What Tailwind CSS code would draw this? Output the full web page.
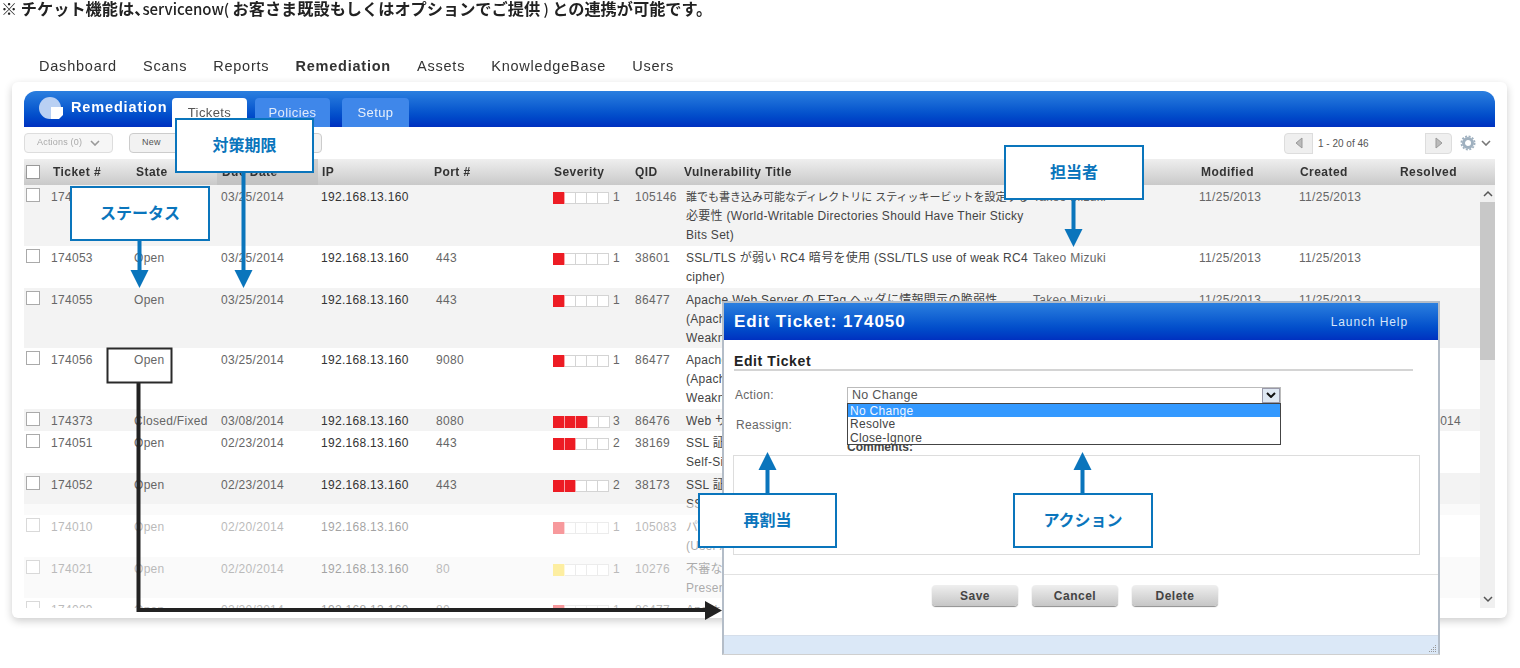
<!DOCTYPE html>
<html lang="ja">
<head>
<meta charset="UTF-8">
<title>Remediation</title>
<script src="https://cdn.jsdelivr.net/npm/@tailwindcss/browser@4"></script>
</head>
<body class="bg-white font-['Liberation_Sans','Noto_Sans_CJK_JP',sans-serif]">
<div class="relative w-[1520px] h-[668px] overflow-hidden blur-[0.4px]">

  <!-- caption -->
  <p class="h-[18px] pl-px text-[16.2px] leading-[16px] font-bold text-[#222] whitespace-nowrap font-['Noto_Sans_CJK_JP',sans-serif]">※ チケット機能は<span class="-mr-[8px]">、</span><span class="text-[15px] font-medium">servicenow( </span>お客さま既設もしくはオプションでご提供<span class="text-[15px] font-medium"> ) </span>との連携が可能です。</p>

  <!-- top nav -->
  <nav class="flex mt-[36px] mb-[2px] h-[26px] pl-[39px] items-center gap-[26px] text-[14.5px] tracking-[0.78px] text-[#333]">
    <a>Dashboard</a><a>Scans</a><a>Reports</a><a class="font-bold">Remediation</a><a>Assets</a><a>KnowledgeBase</a><a>Users</a>
  </nav>

  <!-- main panel -->
  <div class="ml-[12px] w-[1495px] h-[536px] bg-white rounded-md shadow-[0_3px_8px_rgba(0,0,0,0.2)] px-[12px] pt-[9px] overflow-hidden">
    <!-- blue title bar -->
    <div class="flex items-end h-[36px] rounded-t-xl bg-gradient-to-b from-[#2b7fdf] to-[#0030c0] pl-[14px]">
      <div class="flex items-center self-start h-[34px] w-[134px] shrink-0">
        <svg width="26" height="24" viewBox="0 0 26 24"><path d="M12 1a11 11 0 1 0 0 22 11 11 0 0 0 0-22z" fill="#b9d0f3"/><path d="M13 11h12v8l-4 4h-8z" fill="#fff"/></svg>
        <span class="ml-[7px] text-[14.5px] font-bold tracking-[0.85px] text-white">Remediation</span>
      </div>
      <div class="flex h-[29px] w-[75px] justify-center pt-[5px] rounded-t bg-white text-[13px] tracking-[0.4px] text-[#555]">Tickets</div>
      <div class="flex h-[29px] w-[75px] ml-[8px] justify-center pt-[5px] rounded-t bg-[#3f87ea] text-[13px] tracking-[0.4px] text-[#dfeafa]">Policies</div>
      <div class="flex h-[29px] w-[67px] ml-[12px] justify-center pt-[5px] rounded-t bg-[#3f87ea] text-[13px] tracking-[0.4px] text-[#e8f0fb]">Setup</div>
    </div>

    <!-- toolbar -->
    <div class="flex items-center h-[32px] text-[9px] tracking-[0.2px]">
      <div class="flex items-center justify-between w-[89px] h-[20px] px-[12px] rounded border border-[#ddd] bg-[#f6f6f6] text-[#aaa]">Actions (0)
        <svg width="10" height="6" viewBox="0 0 10 6"><path d="M1 1l4 4 4-4" fill="none" stroke="#999" stroke-width="1.6"/></svg>
      </div>
      <div class="flex items-center justify-between w-[193px] h-[20px] ml-[16px] px-[12px] rounded border border-[#ccc] bg-[#f2f2f2] text-[#555]">New
        <svg width="10" height="6" viewBox="0 0 10 6"><path d="M1 1l4 4 4-4" fill="none" stroke="#999" stroke-width="1.6"/></svg>
      </div>
      <div class="flex items-center h-[21px] ml-auto rounded border border-[#ddd] bg-[#efefef]">
        <div class="flex items-center justify-center w-[27px]"><svg width="8" height="12" viewBox="0 0 8 12"><path d="M7 1v10L1 6z" fill="#bbb" stroke="#999"/></svg></div>
        <div class="flex items-center w-[114px] h-[21px] pl-[5px] bg-white border-x border-[#ddd] text-[#555] text-[10px] tracking-normal">1 - 20 of 46</div>
        <div class="flex items-center justify-center w-[25px]"><svg width="8" height="12" viewBox="0 0 8 12"><path d="M1 1v10l6-5z" fill="#bbb" stroke="#999"/></svg></div>
      </div>
      <svg class="ml-[8px]" width="16" height="16" viewBox="0 0 16 16"><circle cx="8" cy="8" r="4.5" fill="none" stroke="#9fb0bf" stroke-width="3"/><circle cx="8" cy="8" r="6.6" fill="none" stroke="#9fb0bf" stroke-width="1.8" stroke-dasharray="2 1.5"/></svg>
      <svg class="ml-[5px] mr-[4px]" width="10" height="6" viewBox="0 0 10 6"><path d="M1 1l4 4 4-4" fill="none" stroke="#777" stroke-width="1.6"/></svg>
    </div>

    <!-- table head -->
    <div class="grid grid-cols-[29px_83px_86px_100px_112px_120px_81px_49px_517px_99px_100px_1fr] items-center h-[26px] bg-gradient-to-b from-[#efefef] to-[#c9c9c9] text-[12px] font-bold tracking-[0.45px] text-[#333]">
      <span class="ml-[2px] w-[14px] h-[14px] border border-[#999] bg-white"></span>
      <span>Ticket #</span><span>State</span>
      <span class="flex items-center justify-self-start w-[101px] h-full bg-[#bdbdbd]/60 -ml-[5px] pl-[5px]">Due Date</span>
      <span>IP</span><span>Port #</span><span>Severity</span><span>QID</span><span>Vulnerability Title</span><span>Modified</span><span>Created</span><span>Resolved</span>
    </div>

    <!-- table body and scrollbar -->
    <div class="flex h-[423px] overflow-hidden">
      <div id="rows" class="relative w-[1456px] shrink-0 overflow-hidden">
        <div class="absolute z-10 top-[319px] inset-x-0 bottom-0 bg-white/55"></div>
      </div>
      <div class="flex flex-col items-center w-[16px] bg-[#f0f0f0]">
        <svg class="my-[5px] shrink-0" width="10" height="7" viewBox="0 0 10 7"><path d="M1 6l4-4 4 4" fill="none" stroke="#555" stroke-width="1.5"/></svg>
        <div class="w-full h-[158px] shrink-0 bg-[#c8c8c8]"></div>
        <svg class="mt-auto mb-[5px] shrink-0" width="10" height="7" viewBox="0 0 10 7"><path d="M1 1l4 4 4-4" fill="none" stroke="#555" stroke-width="1.5"/></svg>
      </div>
    </div>
  </div>

  <!-- edit ticket dialog -->
  <div class="absolute z-20 left-[722px] top-[301px] flex flex-col w-[718px] h-[354px] bg-white border-2 border-[#b4bdc8] border-b-[#cfcfcf]">
    <div class="flex shrink-0 items-center justify-between h-[37px] px-[10px] pr-[30px] bg-gradient-to-b from-[#2b7fdf] to-[#0030c0] text-white">
      <span class="text-[17px] font-bold tracking-[1px]">Edit Ticket: 174050</span>
      <span class="text-[12px] tracking-[0.9px] text-[#d8e6fa]">Launch Help</span>
    </div>
    <div class="relative flex-1 px-[10px]">
      <h2 class="h-[31px] mr-[15px] pt-[13px] border-b-2 border-[#d4d4d4] text-[14px] leading-[16px] font-bold tracking-[0.6px] text-[#222]">Edit Ticket</h2>
      <div class="flex mt-[16px] items-center h-[16px] text-[12px] tracking-[0.3px] text-[#666]">
        <span class="w-[113px] pl-px">Action:</span>
        <div class="relative flex justify-between items-center w-[434px] h-[17px] pl-[4px] border border-[#bbb] text-[#555] text-[12.5px]">No Change
          <span class="flex items-center justify-center w-[18px] h-[15px] bg-[#dfe8f3] border border-[#99a]"><svg width="10" height="6" viewBox="0 0 10 6"><path d="M1 1l4 4 4-4" fill="none" stroke="#111" stroke-width="2"/></svg></span>
          <!-- open select list -->
          <div class="absolute z-10 left-[-1px] top-[15px] w-[434px] h-[42px] bg-white border border-[#444] text-[12px] leading-[14px] tracking-[0.3px] text-[#444]">
            <div class="h-[13px] pl-[2px] bg-[#3399ff] text-[#f0f6ff]">No Change</div>
            <div class="pl-[2px]">Resolve</div>
            <div class="pl-[2px]">Close-Ignore</div>
          </div>
        </div>
      </div>
      <div class="flex mt-[14px] h-[16px] items-center text-[12px] tracking-[0.3px] text-[#666]"><span class="pl-[2px]">Reassign:</span></div>
      <p class="ml-[113px] mt-[8px] h-[14px] text-[12px] leading-[13px] font-bold text-[#444]">Comments:</p>
      <div class="h-[100px] w-[687px] -ml-px border border-[#ddd]"></div>
      <div class="flex justify-center gap-[14px] -mx-[10px] mt-[19px] pt-[10px] h-[61px] border-t border-[#e2e2e2] pr-[12px] text-[12px] font-bold tracking-[0.5px] text-[#444]">
        <button class="w-[86px] h-[21px] rounded-sm bg-gradient-to-b from-[#efefef] to-[#c6c6c6] shadow-[0_1px_1px_rgba(0,0,0,0.45)]">Save</button>
        <button class="w-[86px] h-[21px] rounded-sm bg-gradient-to-b from-[#efefef] to-[#c6c6c6] shadow-[0_1px_1px_rgba(0,0,0,0.45)]">Cancel</button>
        <button class="w-[86px] h-[21px] rounded-sm bg-gradient-to-b from-[#efefef] to-[#c6c6c6] shadow-[0_1px_1px_rgba(0,0,0,0.45)]">Delete</button>
      </div>
    </div>
    <div class="flex shrink-0 justify-end items-end h-[19px] bg-[#dbe8f7] border-t border-[#d5deea] p-px">
      <svg width="9" height="9" viewBox="0 0 9 9" fill="#999"><rect x="7" y="1" width="1" height="1"/><rect x="5" y="3" width="1" height="1"/><rect x="7" y="3" width="1" height="1"/><rect x="3" y="5" width="1" height="1"/><rect x="5" y="5" width="1" height="1"/><rect x="7" y="5" width="1" height="1"/><rect x="1" y="7" width="1" height="1"/><rect x="3" y="7" width="1" height="1"/><rect x="5" y="7" width="1" height="1"/><rect x="7" y="7" width="1" height="1"/></svg>
    </div>
  </div>

  <!-- annotation arrows -->
  <svg class="absolute z-30 inset-0 pointer-events-none" width="1520" height="668" viewBox="0 0 1520 668">
    <g fill="#0a75bc">
      <rect x="137.500" y="240" width="4" height="32"/><path d="M130.500 270h18l-9 18z"/>
      <rect x="241.500" y="172" width="4" height="100"/><path d="M234.500 270h18l-9 18z"/>
      <rect x="1071.500" y="199" width="4" height="32"/><path d="M1064.500 229h18l-9 18z"/>
      <rect x="765.500" y="468" width="4" height="25"/><path d="M758.500 470h18l-9-18z"/>
      <rect x="1080.500" y="468" width="4" height="25"/><path d="M1073.500 470h18l-9-18z"/>
    </g>
    <path d="M138.500 383V610H708" fill="none" stroke="#222" stroke-width="4"/>
    <path d="M705 601l17 9.500-17 9.500z" fill="#222"/>
    <rect x="107.500" y="348.500" width="64" height="34" fill="none" stroke="#2a2a2a" stroke-width="2"/>
  </svg>

  <!-- annotation callouts -->
  <div class="absolute z-30 left-[175px] top-[118px] flex items-center justify-center w-[139px] h-[55px] bg-white border-2 border-[#0a75bc] text-[16px] font-bold text-[#0a75bc]">対策期限</div>
  <div class="absolute z-30 left-[1004px] top-[145px] flex items-center justify-center w-[140px] h-[55px] bg-white border-2 border-[#0a75bc] text-[16px] font-bold text-[#0a75bc]">担当者</div>
  <div class="absolute z-30 left-[70px] top-[186px] flex items-center justify-center w-[140px] h-[55px] bg-white border-2 border-[#0a75bc] text-[16px] font-bold text-[#0a75bc]">ステータス</div>
  <div class="absolute z-30 left-[698px] top-[493px] flex items-center justify-center w-[139px] h-[55px] bg-white border-2 border-[#0a75bc] text-[16px] font-bold text-[#0a75bc]">再割当</div>
  <div class="absolute z-30 left-[1013px] top-[493px] flex items-center justify-center w-[140px] h-[55px] bg-white border-2 border-[#0a75bc] text-[16px] font-bold text-[#0a75bc]">アクション</div>
</div>

<script>
  // ticket rows: [height, id, state, due, port, severity, level colour, qid, title lines, resolved]
  const tickets = [
    [61, "174050", "Open", "03/25/2014", "", 1, "bg-[#ed1c24]", "105146", ['<span class="text-[11px] tracking-normal">誰でも書き込み可能なディレクトリに スティッキービットを設定する</span>', "必要性 (World-Writable Directories Should Have Their Sticky", "Bits Set)"], ""],
    [42, "174053", "Open", "03/25/2014", "443", 1, "bg-[#ed1c24]", "38601", ["SSL/TLS が弱い RC4 暗号を使用 (SSL/TLS use of weak RC4", "cipher)"], ""],
    [60, "174055", "Open", "03/25/2014", "443", 1, "bg-[#ed1c24]", "86477", ["Apache Web Server の ETag ヘッダに情報開示の脆弱性", "(Apache Web Server ETag Header Information Disclosure", "Weakness)"], ""],
    [61, "174056", "Open", "03/25/2014", "9080", 1, "bg-[#ed1c24]", "86477", ["Apache Web Server の ETag ヘッダに情報開示の脆弱性", "(Apache Web Server ETag Header Information Disclosure", "Weakness)"], ""],
    [22, "174373", "Closed/Fixed", "03/08/2014", "8080", 3, "bg-[#ed1c24]", "86476", ["Web サーバーの証明書"], "03/08/2014"],
    [42, "174051", "Open", "02/23/2014", "443", 2, "bg-[#ed1c24]", "38169", ["SSL 証明書 - 自己署名証明書", "Self-Signed Certificate"], ""],
    [42, "174052", "Open", "02/23/2014", "443", 2, "bg-[#ed1c24]", "38173", ["SSL 証明書 - 署名の検証失敗", "SSL Certificate"], ""],
    [42, "174010", "Open", "02/20/2014", "", 1, "bg-[#ed1c24]", "105083", ["パスワードの有効期限", "(User Account)"], ""],
    [41, "174021", "Open", "02/20/2014", "80", 1, "bg-[#fbd92f]", "10276", ["不審なファイル", "Present"], ""],
    [42, "174009", "Open", "02/20/2014", "80", 1, "bg-[#ed1c24]", "86477", ["Apache Web Server"], ""],
  ];
  const rowsEl = document.getElementById("rows");
  tickets.forEach((t, i) => {
    const [h, id, state, due, port, sev, colour, qid, lines, resolved] = t;
    let bars = "";
    for (let n = 1; n <= 5; n++) {
      bars += n <= sev
        ? `<span class="w-[11.500px] h-full border-r border-white/60 ${colour}"></span>`
        : `<span class="w-[11px] h-full border-y border-r border-[#d4d4d4] bg-white"></span>`;
    }
    const row = document.createElement("div");
    row.className = "grid grid-cols-[27px_83px_87px_100px_115px_117px_82px_51px_347px_166px_100px_99px_1fr] pt-[3px] overflow-hidden text-[12px] leading-[19px] tracking-[0.3px] text-[#666] " + (i % 2 === 0 ? "bg-[#f3f3f3]" : "bg-white");
    row.style.height = h + "px";
    row.innerHTML = `
      <span class="ml-[2px] w-[14px] h-[14px] border border-[#aaa] bg-white"></span>
      <span>${id}</span>
      <span class="whitespace-nowrap">${state}</span>
      <span>${due}</span>
      <span class="text-[#333]">192.168.13.160</span>
      <span>${port}</span>
      <span class="flex items-center h-[19px]"><span class="flex h-[12px] w-[57px]">${bars}</span><span class="ml-[3px]">${sev}</span></span>
      <span>${qid}</span>
      <span class="text-[#444] whitespace-nowrap">${lines.join("<br>")}</span>
      <span>Takeo Mizuki</span>
      <span>11/25/2013</span>
      <span>11/25/2013</span>
      <span>${resolved}</span>`;
    rowsEl.appendChild(row);
  });
</script>
</body>
</html>
